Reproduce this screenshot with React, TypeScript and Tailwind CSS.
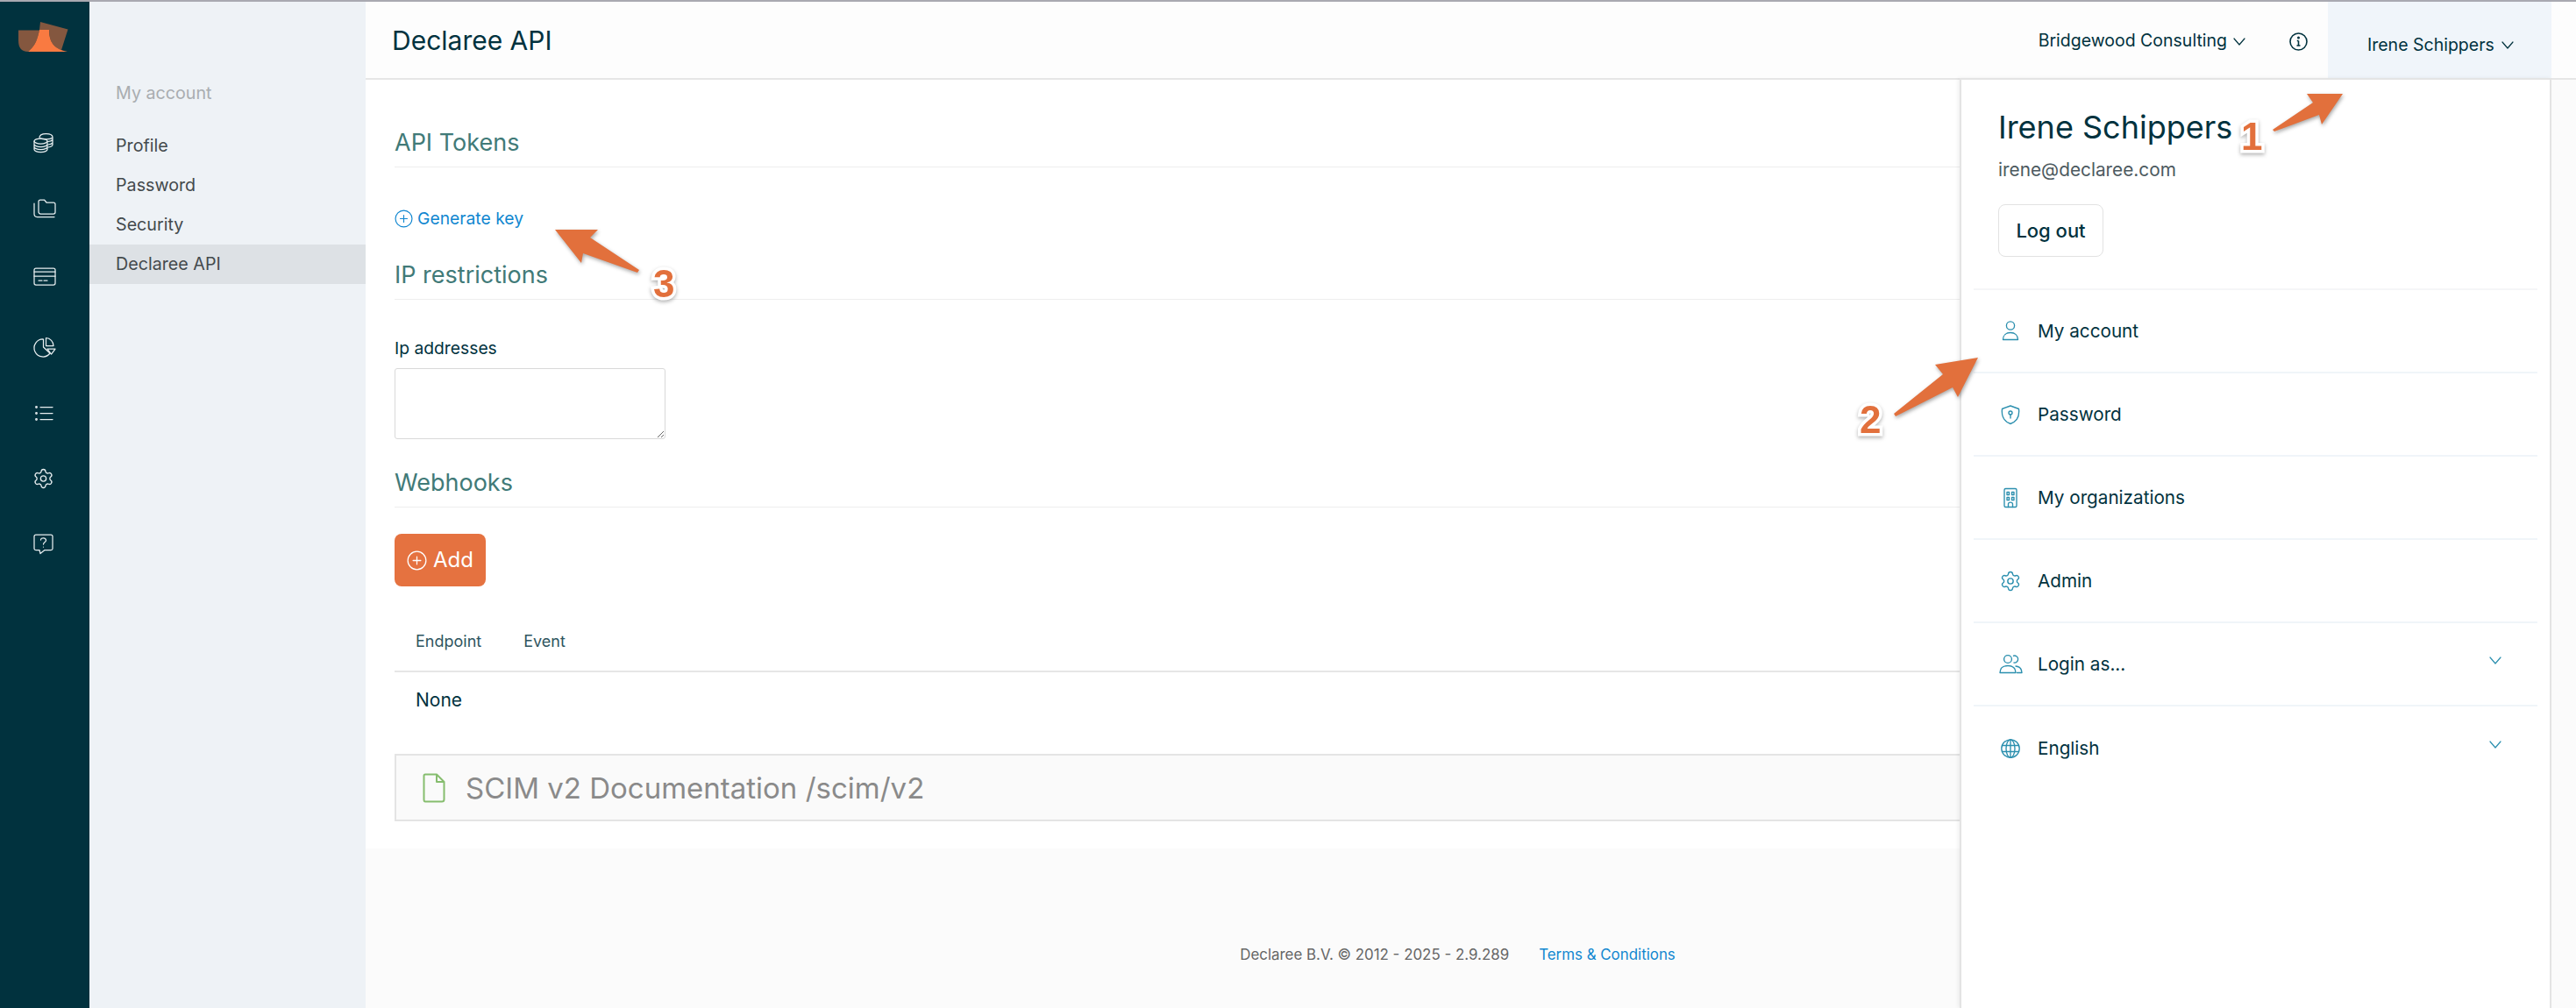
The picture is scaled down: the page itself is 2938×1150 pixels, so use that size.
import type { ReactNode } from "react";

const stroke = {
  fill: "none",
  stroke: "currentColor",
  strokeLinecap: "round" as const,
  strokeLinejoin: "round" as const,
};

const gearPath =
  "M9.671 4.136a2.34 2.34 0 0 1 4.659 0 2.34 2.34 0 0 0 3.319 1.915 2.34 2.34 0 0 1 2.33 4.033 2.34 2.34 0 0 0 0 3.831 2.34 2.34 0 0 1-2.33 4.033 2.34 2.34 0 0 0-3.319 1.915 2.34 2.34 0 0 1-4.659 0 2.34 2.34 0 0 0-3.32-1.915 2.34 2.34 0 0 1-2.33-4.033 2.34 2.34 0 0 0 0-3.831A2.34 2.34 0 0 1 6.35 6.051a2.34 2.34 0 0 0 3.319-1.915";

function Logo() {
  return (
    <svg width="60" height="40" viewBox="0 0 60 40">
      <path d="M1 10.5H25C22 25 18 30 12 35C4 35 1 30 1 22Z" fill="#84573f" />
      <path d="M26 1L57.5 9.5L50 33C40 30 36 22 36 10H25Z" fill="#84573f" />
      <path d="M25 10H36C36 22 40 32 57 35H12C18 30 22 25 25 10Z" fill="#f97a41" />
    </svg>
  );
}

function SideIcon({ children }: { children: ReactNode }) {
  return (
    <svg width="28" height="26" viewBox="0 0 28 26" strokeWidth="1.25" className="overflow-visible" {...stroke}>
      {children}
    </svg>
  );
}

function Chevron({ className }: { className: string }) {
  return (
    <svg className={className} width="14" height="9" viewBox="0 0 14 9" strokeWidth="1.2" {...stroke}>
      <path d="M1 1L7 8L13 1" />
    </svg>
  );
}

function PlusCircle({ size }: { size: number }) {
  return (
    <svg width={size} height={size} viewBox="0 0 20 20" strokeWidth="1.1" {...stroke}>
      <circle cx="10" cy="10" r="9" />
      <path d="M10 6.2V13.8M6.2 10H13.8" />
    </svg>
  );
}

function SectionTitle({ children, className }: { children: ReactNode; className: string }) {
  return (
    <h2 className={`border-b border-[#eeeeee] pb-[10px] text-[27px] leading-[34px] text-[#417a78] ${className}`}>
      {children}
    </h2>
  );
}

function MenuIcon({ children }: { children: ReactNode }) {
  return (
    <svg width="26" height="26" viewBox="0 0 26 26" strokeWidth="1.35" className="overflow-visible text-[#2b8fae]" {...stroke}>
      {children}
    </svg>
  );
}

const menuItems: { label: string; icon: ReactNode; more?: boolean }[] = [
  {
    label: "My account",
    icon: (
      <>
        <circle cx="13" cy="6.5" r="4.6" />
        <path d="M4.5 22.5C4.5 17.5 8 14.5 13 14.5S21.5 17.5 21.5 22.5Z" />
      </>
    ),
  },
  {
    label: "Password",
    icon: (
      <>
        <path d="M13 3L22.5 6.5C23.5 15 20 21 13 23.5C6 21 2.5 15 3.5 6.5Z" />
        <circle cx="13" cy="11" r="2" />
        <path d="M13 13V17" />
      </>
    ),
  },
  {
    label: "My organizations",
    icon: (
      <>
        <rect x="6" y="2.5" width="14" height="21" rx="1.5" />
        <path d="M9 6.5H11.5V9.5H9ZM14.5 6.5H17V9.5H14.5ZM9 12.5H11.5V15.5H9ZM14.5 12.5H17V15.5H14.5ZM10.5 23.5V20C10.5 17.5 15.5 17.5 15.5 20V23.5" />
      </>
    ),
  },
  {
    label: "Admin",
    icon: (
      <g transform="translate(0.4 0.4) scale(1.05)">
        <path d={gearPath} />
        <circle cx="12" cy="12" r="3" />
      </g>
    ),
  },
  {
    label: "Login as...",
    more: true,
    icon: (
      <>
        <circle cx="10" cy="7" r="4.4" />
        <path d="M16.5 3.2A4 4 0 1 1 17 11" />
        <path d="M1 22.5C1 17.5 4.5 14.5 10 14.5S19 17.5 19 22.5Z" />
        <path d="M19 15C23 15.5 26 18 26 22.5H20.5" />
      </>
    ),
  },
  {
    label: "English",
    more: true,
    icon: (
      <>
        <circle cx="13" cy="13" r="10.2" />
        <ellipse cx="13" cy="13" rx="5" ry="10.2" />
        <path d="M3.5 9.5H22.5M3.5 16.5H22.5M13 3V23" />
      </>
    ),
  },
];

function Badge({ n, className }: { n: string; className: string }) {
  return (
    <span
      className={`absolute font-['Liberation_Sans',sans-serif] text-[44px] leading-none font-bold text-[#e2703c] [paint-order:stroke_fill] [-webkit-text-stroke:7px_#ffffff] drop-shadow-[0_2px_2px_rgba(0,0,0,0.3)] ${className}`}
    >
      {n}
    </span>
  );
}

export default function App() {
  return (
    <div className="relative flex h-[1150px] w-[2938px] overflow-hidden border-t-2 border-[#a9a9b1] bg-[#fbfbfb] font-['Inter',sans-serif] text-[#01323e]">
      {/* Icon rail */}
      <aside className="flex w-[102px] shrink-0 flex-col bg-[#01323e] pl-[36px] text-[#e8eef0]">
        <div className="mt-[22px] -ml-[16px]">
          <Logo />
        </div>
        <div className="mt-[86px] flex flex-col gap-[50.4px]">
          <SideIcon>
            <ellipse cx="10.5" cy="11" rx="7.5" ry="3" />
            <path d="M3 11V20.5C3 22 6 23.5 10.5 23.5S18 22 18 20.5V11M3 14.5C3 16 6 17.5 10.5 17.5S18 16 18 14.5M3 17.5C3 19 6 20.5 10.5 20.5S18 19 18 17.5" />
            <path d="M9 7C9 4 12 2.5 16.5 2.5S24 4 24 6.5V15C24 16.5 22 17.5 19 18M10 8C13 9 21 9.5 24 7M19 11.5C21 11.3 23 10.5 24 9.5M19 15C21 14.8 23 14 24 13" />
          </SideIcon>
          <SideIcon>
            <path d="M8 4V15.5C8 17 9 18 10.5 18H25C26 18 27 17 27 16V7C27 6 26 5 25 5H17L14.5 2H10C9 2 8 3 8 4Z" />
            <path d="M3 6V18C3 20 4.5 21.5 6.5 21.5H26" />
          </SideIcon>
          <SideIcon>
            <rect x="3" y="3" width="24" height="19" rx="2" />
            <path d="M3 7H27M3 12H27M8 17H12M14 17H18" />
          </SideIcon>
          <SideIcon>
            <path d="M13.5 8A10 10 0 1 0 21 24L13.5 17Z" />
            <path d="M16.5 6.5A9 9 0 0 1 25 15.5H16.5Z" />
            <path d="M18 19H27L22.5 25Z" />
          </SideIcon>
          <SideIcon>
            <path d="M10 8.5H24M10 15.5H24M10 22.5H24" />
            <circle cx="5.5" cy="8.5" r="0.8" />
            <circle cx="5.5" cy="15.5" r="0.8" />
            <circle cx="5.5" cy="22.5" r="0.8" />
          </SideIcon>
          <SideIcon>
            <g transform="translate(0.9 1.4) scale(1.05)">
              <path d={gearPath} />
              <circle cx="12" cy="12" r="3" />
            </g>
          </SideIcon>
          <SideIcon>
            <path d="M5 2H22C23.5 2 24 2.5 24 4V18C24 19 23.5 19.5 22 19.5H15L10 23.5L9 19.5H5C3.5 19.5 3 19 3 18V4C3 2.5 3.5 2 5 2Z" />
            <path d="M10.5 8C10.5 5 16.5 5 16.5 8.5C16.5 10.5 13.5 10.5 13.5 13M13.5 16V16.1" />
          </SideIcon>
        </div>
      </aside>

      {/* Account sub navigation */}
      <nav className="flex w-[315px] shrink-0 flex-col bg-[#eef2f6] pt-[88px] text-[19.7px] text-[#444a4d]">
        <div className="pl-[30px] leading-[32px] text-[#a9adb0]">My account</div>
        <ul className="mt-[22px] flex flex-col">
          <li className="flex h-[45px] items-center pl-[30px]">Profile</li>
          <li className="flex h-[45px] items-center pl-[30px]">Password</li>
          <li className="flex h-[45px] items-center pl-[30px]">Security</li>
          <li className="flex h-[45px] items-center bg-[#dde1e5] pl-[30px]">Declaree API</li>
        </ul>
      </nav>

      <div className="flex min-w-0 flex-1 flex-col">
        {/* Header */}
        <header className="flex h-[89px] shrink-0 items-center border-b-2 border-[#e6e6e6] bg-[#fdfdfd] pr-[28px] pl-[30px]">
          <h1 className="text-[30px] leading-[36px] text-[#01323e]">Declaree API</h1>
          <div className="ml-auto flex items-center pt-[3px] text-[19.5px]">
            Bridgewood Consulting
            <Chevron className="ml-[7px]" />
          </div>
          <svg className="mt-[3px] ml-[50px]" width="21" height="21" viewBox="0 0 21 21" fill="none" stroke="currentColor" strokeWidth="1.6">
            <circle cx="10.5" cy="10.5" r="9.5" />
            <path d="M10.5 9.5V15M8.5 15H12.5M8.8 9.5H10.5" />
            <circle cx="10.5" cy="6" r="0.7" fill="currentColor" />
          </svg>
          <div className="ml-[23px] flex h-[87px] w-[255px] items-center bg-[#f0f5fa] pt-[12px] pl-[45px] text-[19.5px]">
            Irene Schippers
            <Chevron className="ml-[8px]" />
          </div>
        </header>

        {/* Page content */}
        <main className="mr-[28px] flex flex-col bg-white pr-[40px] pb-[31px] pl-[33px]">
          <SectionTitle className="mt-[55px]">API Tokens</SectionTitle>
          <a className="mt-[44px] flex items-center gap-[5px] text-[19.3px] leading-[28px] text-[#1187d0]">
            <PlusCircle size={21} />
            Generate key
          </a>
          <SectionTitle className="mt-[34px]">IP restrictions</SectionTitle>
          <label className="mt-[41px] text-[19.3px] leading-[28px]">Ip addresses</label>
          <textarea className="mt-[9px] h-[81px] w-[309px] rounded-[3px] border border-[#d9d9d9] bg-white" />
          <SectionTitle className="mt-[33px]">Webhooks</SectionTitle>
          <button className="mt-[30px] flex h-[60px] w-[104px] items-center justify-center gap-[7px] rounded-[8px] bg-[#e57240] text-[24px] text-white">
            <PlusCircle size={23} />
            Add
          </button>
          <table className="mt-[27px] w-full border-collapse text-left">
            <thead>
              <tr className="h-[70px] border-b-2 border-[#e6e6e6] text-[18px] font-normal text-[#2f5560]">
                <th className="w-[123px] px-6 pt-[2px] font-normal">Endpoint</th>
                <th className="px-6 pt-[2px] font-normal">Event</th>
              </tr>
            </thead>
            <tbody>
              <tr className="h-[64px] text-[21px]">
                <td className="px-6" colSpan={2}>None</td>
              </tr>
            </tbody>
          </table>
          <div className="mt-[30px] flex h-[77px] items-center border-2 border-[#e4e4e4] bg-[#fafafa] pl-[30px]">
            <svg width="26" height="34" viewBox="0 0 26 34" fill="none" stroke="#86bd6e" strokeWidth="2" strokeLinejoin="round">
              <path d="M3 1.5H16L24.5 10V30C24.5 31.5 23.5 32.5 22 32.5H3C2 32.5 1.5 31.5 1.5 30V3C1.5 2 2 1.5 3 1.5Z" />
              <path d="M16 1.5V10H24.5" />
            </svg>
            <span className="mt-[2px] ml-[23px] text-[33px] leading-none text-[#8a8a8a]">SCIM v2 Documentation /scim/v2</span>
          </div>
        </main>

        {/* Footer */}
        <footer className="flex flex-1 items-start justify-center gap-[34px] pt-[111px] pr-[30px] text-[16.9px] leading-[20px] text-[#666666]">
          <span>Declaree B.V. © 2012 - 2025 - 2.9.289</span>
          <a className="text-[#1187d0]">Terms &amp; Conditions</a>
        </footer>
      </div>

      {/* User dropdown */}
      <div className="absolute top-[87px] right-[28px] bottom-0 flex w-[675px] flex-col border-x-2 border-t-2 border-[#e4e4e4] bg-white px-[14px] shadow-[-2px_0_4px_rgba(0,0,0,0.06)]">
        <div className="border-b-2 border-[#f5f6f8] pt-[32px] pb-[36px] pl-[28px]">
          <div className="text-[36px] leading-[44px]">Irene Schippers</div>
          <div className="mt-[13px] text-[20.8px] leading-[28px] text-[#4d5a5f]">irene@declaree.com</div>
          <button className="mt-[25px] h-[60px] w-[120px] rounded-[8px] border border-[#e2e2e2] bg-white text-[22px] font-medium">Log out</button>
        </div>
        {menuItems.map((item) => (
          <div key={item.label} className="flex h-[95px] shrink-0 items-center border-b-2 border-[#f0f5f9] pr-[41px] pl-[29px] last:border-b-0">
            <MenuIcon>{item.icon}</MenuIcon>
            <span className="ml-[18px] text-[20.7px]">{item.label}</span>
            {item.more && <Chevron className="mb-[8px] ml-auto text-[#2b8fae]" />}
          </div>
        ))}
      </div>

      {/* Screenshot annotations */}
      <svg className="pointer-events-none absolute top-[-2px] left-0 drop-shadow-[1px_2px_2px_rgba(0,0,0,0.35)]" width="2938" height="1150" viewBox="0 0 2938 1150" fill="#e2703c">
        <polygon points="2672,107 2631,107 2638,117 2592,148 2594,150 2645,131 2648,142" />
        <polygon points="2256,408 2207,416 2216,427 2160,472 2162,475 2227,442 2233,453" />
        <polygon points="633,262 682,262 673,271 729,308 727,311 665,289 663,300" />
      </svg>
      <Badge n="1" className="top-[132px] left-[2556px]" />
      <Badge n="2" className="top-[455px] left-[2121px]" />
      <Badge n="3" className="top-[300px] left-[745px]" />
    </div>
  );
}
